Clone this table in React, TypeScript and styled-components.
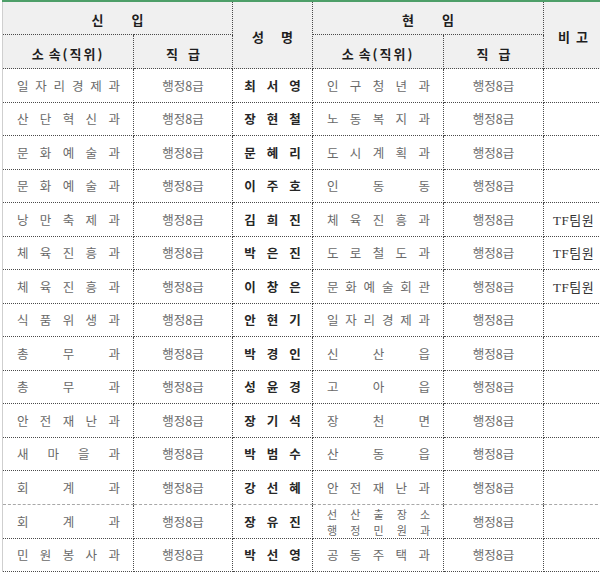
import React from 'react';
import styled, { createGlobalStyle } from 'styled-components';

const GlobalStyle = createGlobalStyle`
  html, body {
    margin: 0;
    padding: 0;
    background: #ffffff;
  }
  body {
    font-family: 'Noto Sans CJK KR', 'Noto Sans', sans-serif;
  }
`;

const lineColor = '#4a4a4a';

const Page = styled.div`
  width: 600px;
  height: 572px;
  overflow: hidden;
  padding-left: 2px;
  box-sizing: border-box;
  background: #fff;
`;

const Table = styled.table`
  width: 600px;
  table-layout: fixed;
  border-collapse: collapse;
  border-top: 2px solid #4e9f69;
`;

const HeadCell = styled.th<{ $bottom?: boolean }>`
  background: #f0f0f0;
  height: ${(p) => (p.$bottom ? 33 : 32)}px;
  padding: 0;
  font-size: 13px;
  font-weight: 700;
  color: #1e1e1e;
  text-align: center;
  border: 1px dotted ${lineColor};
  border-top: none;
  &:first-child {
    border-left: 1px solid #cfcfcf;
  }
`;

const Cell = styled.td<{ $soft?: boolean }>`
  height: 32.5px;
  padding: 0;
  border-left: 1px dotted ${lineColor};
  border-right: 1px dotted ${lineColor};
  border-bottom: 1px ${(p) => (p.$soft ? 'dashed #a8a8a8' : `dotted ${lineColor}`)};
  &:first-child {
    border-left: 1px solid #cfcfcf;
  }
`;

const Spread = styled.div<{ $gap: number; $spacing?: number }>`
  display: flex;
  justify-content: center;
  align-items: center;
  gap: ${(p) => p.$gap}px;
  padding-top: 3px;
  letter-spacing: ${(p) => p.$spacing ?? 0}px;
`;

const Distributed = styled.div<{ $double?: boolean }>`
  display: flex;
  flex-direction: column;
  justify-content: center;
  padding: 1px 13px 0 14px;
  font-size: ${(p) => (p.$double ? 11 : 12.5)}px;
  color: #6a6a6a;
`;

const DistLine = styled.div<{ $tight?: boolean }>`
  display: flex;
  justify-content: space-between;
  line-height: ${(p) => (p.$tight ? 16 : 18)}px;
`;

const Grade = styled.div`
  text-align: center;
  font-size: 12.5px;
  color: #6c6c6c;
`;

const Name = styled.div`
  display: flex;
  justify-content: center;
  gap: 11px;
  font-size: 12.5px;
  font-weight: 700;
  color: #262626;
`;

const Note = styled.div`
  padding-left: 9px;
  font-size: 13px;
  letter-spacing: 0.5px;
  color: #333;
  font-family: 'Liberation Serif', 'Noto Sans CJK KR', serif;
`;

type Row = {
  from: string;
  name: string;
  to: string | string[];
  note?: string;
};

const rows: Row[] = [
  { from: '일자리경제과', name: '최서영', to: '인구청년과' },
  { from: '산단혁신과', name: '장현철', to: '노동복지과' },
  { from: '문화예술과', name: '문혜리', to: '도시계획과' },
  { from: '문화예술과', name: '이주호', to: '인동동' },
  { from: '낭만축제과', name: '김희진', to: '체육진흥과', note: 'TF팀원' },
  { from: '체육진흥과', name: '박은진', to: '도로철도과', note: 'TF팀원' },
  { from: '체육진흥과', name: '이창은', to: '문화예술회관', note: 'TF팀원' },
  { from: '식품위생과', name: '안현기', to: '일자리경제과' },
  { from: '총무과', name: '박경인', to: '신산읍' },
  { from: '총무과', name: '성윤경', to: '고아읍' },
  { from: '안전재난과', name: '장기석', to: '장천면' },
  { from: '새마을과', name: '박범수', to: '산동읍' },
  { from: '회계과', name: '강선혜', to: '안전재난과' },
  { from: '회계과', name: '장유진', to: ['선산출장소', '행정민원과'] },
  { from: '민원봉사과', name: '박선영', to: '공동주택과' },
];

const chars = (s: string) => s.split('').map((c, i) => <span key={i}>{c}</span>);

const Dept = ({ text }: { text: string | string[] }) => {
  const lines = Array.isArray(text) ? text : [text];
  const double = lines.length > 1;
  return (
    <Distributed $double={double}>
      {lines.map((l, i) => (
        <DistLine key={i} $tight={double}>
          {chars(l)}
        </DistLine>
      ))}
    </Distributed>
  );
};

const App = () => {
  return (
    <Page>
      <GlobalStyle />
      <Table>
        <colgroup>
          <col style={{ width: 131 }} />
          <col style={{ width: 99 }} />
          <col style={{ width: 80 }} />
          <col style={{ width: 131 }} />
          <col style={{ width: 100 }} />
          <col style={{ width: 59 }} />
        </colgroup>
        <thead>
          <tr>
            <HeadCell colSpan={2}>
              <Spread $gap={28}>
                <span>신</span>
                <span>입</span>
              </Spread>
            </HeadCell>
            <HeadCell rowSpan={2}>
              <Spread $gap={17}>
                <span>성</span>
                <span>명</span>
              </Spread>
            </HeadCell>
            <HeadCell colSpan={2}>
              <Spread $gap={28}>
                <span>현</span>
                <span>임</span>
              </Spread>
            </HeadCell>
            <HeadCell rowSpan={2}>
              <Spread $gap={6}>
                <span>비</span>
                <span>고</span>
              </Spread>
            </HeadCell>
          </tr>
          <tr>
            <HeadCell $bottom>
              <Spread $gap={3} $spacing={2}>
                <span>소</span>
                <span>속(직위)</span>
              </Spread>
            </HeadCell>
            <HeadCell $bottom>
              <Spread $gap={10}>
                <span>직</span>
                <span>급</span>
              </Spread>
            </HeadCell>
            <HeadCell $bottom>
              <Spread $gap={3} $spacing={2}>
                <span>소</span>
                <span>속(직위)</span>
              </Spread>
            </HeadCell>
            <HeadCell $bottom>
              <Spread $gap={10}>
                <span>직</span>
                <span>급</span>
              </Spread>
            </HeadCell>
          </tr>
        </thead>
        <tbody>
          {rows.map((r, i) => {
            const soft = i === 12;
            return (
              <tr key={i}>
                <Cell $soft={soft}>
                  <Dept text={r.from} />
                </Cell>
                <Cell $soft={soft}>
                  <Grade>행정8급</Grade>
                </Cell>
                <Cell $soft={soft}>
                  <Name>{chars(r.name)}</Name>
                </Cell>
                <Cell $soft={soft}>
                  <Dept text={r.to} />
                </Cell>
                <Cell $soft={soft}>
                  <Grade>행정8급</Grade>
                </Cell>
                <Cell $soft={soft}>{r.note && <Note>{r.note}</Note>}</Cell>
              </tr>
            );
          })}
        </tbody>
      </Table>
    </Page>
  );
};

export default App;
